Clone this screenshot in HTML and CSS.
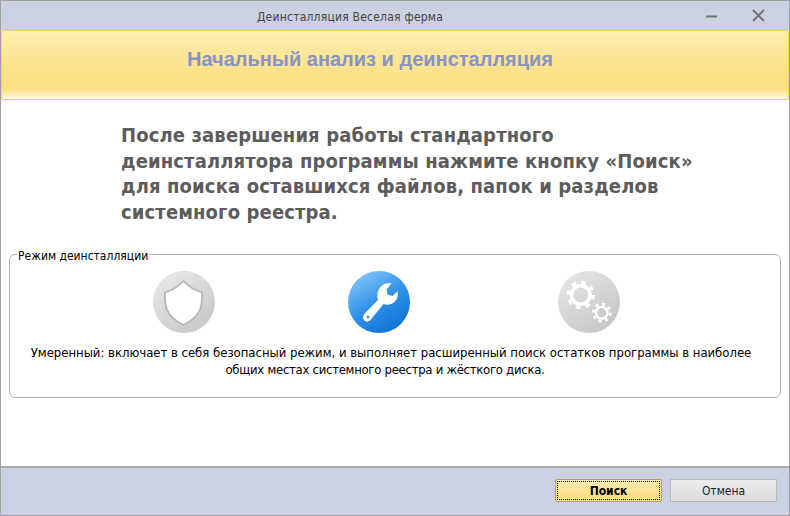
FILE: index.html
```html
<!DOCTYPE html>
<html lang="ru">
<head>
<meta charset="utf-8">
<title>Деинсталляция Веселая ферма</title>
<link rel="stylesheet" href="styles.css">
</head>
<body>
<div class="window">
  <header class="titlebar">
    <span class="title">Деинсталляция Веселая ферма</span>
    <div class="controls">
      <svg class="ctl" width="12" height="12" viewBox="0 0 12 12"><path d="M0 6.500H11" stroke="#6f6f6f" stroke-width="2"/></svg>
      <svg class="ctl" width="13" height="13" viewBox="0 0 13 13"><path d="M1 1L12 12M12 1L1 12" stroke="#6f6f6f" stroke-width="1.800" fill="none"/></svg>
    </div>
  </header>
  <div class="banner"><h1>Начальный анализ и деинсталляция</h1></div>
  <main class="content">
    <p class="lead">После завершения работы стандартного<br>деинсталлятора программы нажмите кнопку «Поиск»<br>для поиска оставшихся файлов, папок и разделов<br>системного реестра.</p>
    <fieldset class="group">
      <legend>Режим деинсталляции</legend>
      <div class="modes">
        <svg class="mode" width="62" height="62" viewBox="0 0 62 62">
          <defs>
            <linearGradient id="g1" x1="0.15" y1="0" x2="0.85" y2="1"><stop offset="0" stop-color="#e9e9ea"/><stop offset="1" stop-color="#c6c6c6"/></linearGradient>
          </defs>
          <circle cx="31" cy="31" r="31" fill="url(#g1)"/>
          <path d="M30.500 10C25.500 15.500 19 19.500 12 21.500C11.800 28 12 33 13.500 37.500C16 44.500 22.500 50 30.500 54C38.500 50 45 44.500 47.500 37.500C49 33 49.200 28 49 21.500C42 19.500 35.500 15.500 30.500 10Z" fill="#fff" stroke="#b6b6b6" stroke-width="1.800"/>
        </svg>
        <svg class="mode" width="62" height="62" viewBox="0 0 62 62">
          <defs>
            <linearGradient id="g2" x1="0.2" y1="0" x2="0.8" y2="1"><stop offset="0" stop-color="#86c6fb"/><stop offset="0.5" stop-color="#2f92e9"/><stop offset="1" stop-color="#0d6fd2"/></linearGradient>
          </defs>
          <circle cx="31" cy="31" r="31" fill="url(#g2)"/>
          <path d="M16 43L30 29C28.500 23.500 29.500 18.500 33.500 15C36.500 12.500 40.500 11.500 43.500 12.500L38.500 18.500L39.500 23.500L44.500 25L49.500 20C50.500 24 49.500 28 46.500 31C43.500 33.500 39.500 34.500 35.500 33L22 49.500C20.500 51 18 51 16.500 49.500C14.500 47.500 14.500 45 16 43Z" fill="#fff"/>
          <circle cx="20" cy="46" r="1.500" fill="#3b93e2"/>
        </svg>
        <svg class="mode" width="62" height="62" viewBox="0 0 62 62">
          <defs>
            <linearGradient id="g3" x1="0.15" y1="0" x2="0.85" y2="1"><stop offset="0" stop-color="#e6e6e7"/><stop offset="1" stop-color="#c4c4c4"/></linearGradient>
          </defs>
          <circle cx="31" cy="31" r="31" fill="url(#g3)"/>
          <g fill="none" stroke="#fff">
            <circle cx="22.700" cy="24" r="9.200" stroke-width="3.600"/>
            <circle cx="22.700" cy="24" r="12.500" stroke-width="3.500" stroke-dasharray="4.500 5.320"/>
            <circle cx="43.700" cy="41.700" r="5.800" stroke-width="2.400"/>
            <circle cx="43.700" cy="41.700" r="8.500" stroke-width="3" stroke-dasharray="3 3.680"/>
          </g>
        </svg>
      </div>
      <p class="desc">Умеренный: включает в себя безопасный режим, и выполняет расширенный поиск остатков программы в наиболее<br><span class="desc-tail">общих местах системного реестра и жёсткого диска.</span></p>
    </fieldset>
  </main>
  <footer class="footer">
    <button class="btn btn-primary" type="button"><span class="focus">Поиск</span></button>
    <button class="btn" type="button">Отмена</button>
  </footer>
</div>
</body>
</html>
```

FILE: styles.css
```css
* { box-sizing: border-box; }
html, body { margin: 0; padding: 0; }
body { width: 790px; height: 516px; overflow: hidden; background: #fff; font-family: "DejaVu Sans Condensed", "DejaVu Sans", sans-serif; }
.window { width: 790px; height: 516px; display: flex; flex-direction: column; border: 1px solid #a0a0a0; background: #fff; }
.titlebar { height: 29px; flex: none; background: #cbd0e2; display: flex; align-items: center; justify-content: center; position: relative; padding-right: 90px; }
.title { font-size: 12px; letter-spacing: 0.22px; color: #444; padding-top: 2px; }
.controls { position: absolute; right: 0; top: 0; display: flex; align-items: center; gap: 34px; padding: 8px 24px 0 0; }
.banner { height: 70px; flex: none; border: 1px solid #f4d264; border-radius: 2px; background: linear-gradient(#fdeeb0 0, #fbe596 40%, #fbdf82 78%, #fce08a 86%, #fffbe8 100%); display: flex; align-items: center; justify-content: center; padding-right: 50px; }
.banner h1 { margin: 0 0 11px; font: bold 20px "Liberation Sans", Arial, sans-serif; color: #8794c4; }
.content { flex: 1; padding: 23px 8px 0; }
.lead { margin: 0 0 21px 112px; font-size: 20px; letter-spacing: 0.13px; line-height: 25.7px; font-weight: bold; color: #5c5c5c; white-space: nowrap; }
.group { margin: 0; height: 151px; padding: 0 0 0 8px; border: 1px solid #b0b0b0; border-radius: 6px; }
.group legend { padding: 2px 1px 0; font-size: 12px; line-height: 14px; color: #000; margin-left: -1px; }
.modes { display: flex; gap: 133px; padding: 8px 0 0 135px; }
.mode:last-child { margin-left: 15px; }
.desc { margin: 11px 0 0 4px; width: 738px; font-size: 13px; letter-spacing: -0.02px; line-height: 17px; color: #000; text-align: center; white-space: nowrap; }
.desc-tail { display: inline-block; letter-spacing: -0.28px; padding-right: 12px; }
.footer { height: 49px; flex: none; background: #cbd0e2; border-top: 2px solid #a8a8a8; display: flex; align-items: center; justify-content: flex-end; gap: 8px; padding: 0 12px 2px 0; }
.btn { width: 107px; height: 23px; padding: 0; font: 12px "DejaVu Sans Condensed", "DejaVu Sans", sans-serif; color: #222; border: 1px solid #b8b8b8; background: linear-gradient(#ececec, #dcdcdc); }
.btn-primary { border: 1px solid #c29b4e; border-radius: 2px; background: linear-gradient(#fdeeb5, #fcd97b); font-weight: bold; color: #000; padding: 1px; }
.focus { display: flex; align-items: center; justify-content: center; width: 100%; height: 100%; border: 1px dotted #000; }
```
